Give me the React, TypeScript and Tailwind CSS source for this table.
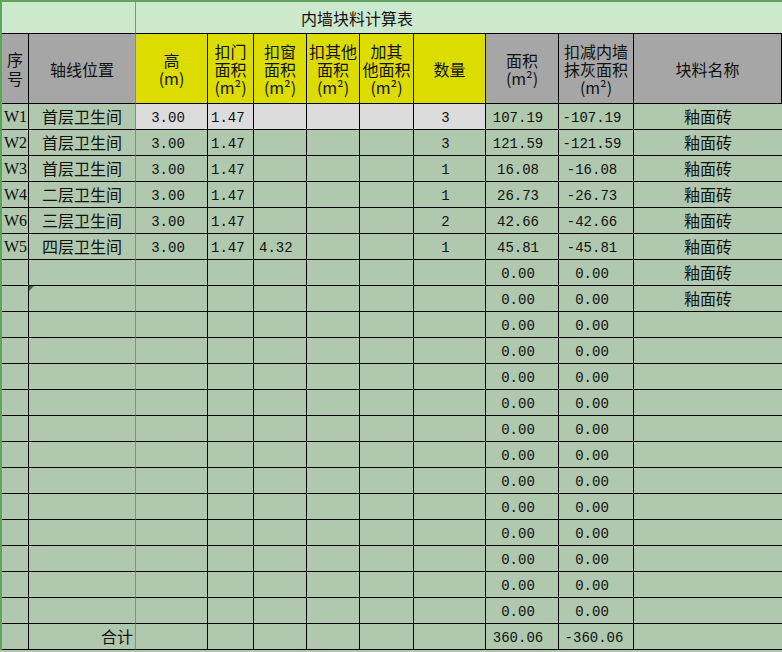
import React from 'react';

type Row = {
  no?: string;
  pos?: string;
  h?: string;
  door?: string;
  win?: string;
  qty?: string;
  area: string;
  deduct: string;
  name?: string;
  hl?: boolean;
  mark?: boolean;
};

const rows: Row[] = [
  { no: 'W1', pos: '首层卫生间', h: '3.00', door: '1.47', qty: '3', area: '107.19', deduct: '-107.19', name: '釉面砖', hl: true },
  { no: 'W2', pos: '首层卫生间', h: '3.00', door: '1.47', qty: '3', area: '121.59', deduct: '-121.59', name: '釉面砖' },
  { no: 'W3', pos: '首层卫生间', h: '3.00', door: '1.47', qty: '1', area: '16.08', deduct: '-16.08', name: '釉面砖' },
  { no: 'W4', pos: '二层卫生间', h: '3.00', door: '1.47', qty: '1', area: '26.73', deduct: '-26.73', name: '釉面砖' },
  { no: 'W6', pos: '三层卫生间', h: '3.00', door: '1.47', qty: '2', area: '42.66', deduct: '-42.66', name: '釉面砖' },
  { no: 'W5', pos: '四层卫生间', h: '3.00', door: '1.47', win: '4.32', qty: '1', area: '45.81', deduct: '-45.81', name: '釉面砖' },
  { area: '0.00', deduct: '0.00', name: '釉面砖' },
  { area: '0.00', deduct: '0.00', name: '釉面砖', mark: true },
  ...Array.from({ length: 12 }, () => ({ area: '0.00', deduct: '0.00' })),
];

const grid = 'grid grid-cols-[27px_107px_72px_46px_53px_53px_54px_72px_73px_75px_148px]';
const cjk = "font-['Noto_Sans_CJK_SC',sans-serif] text-[16px]";
const mono = "font-['Liberation_Mono',monospace] text-[14px] leading-none pt-[3px]";
const txt = `${cjk} leading-none pb-[2px]`;
const cell = 'border-r border-b border-black flex items-center min-w-0';
const greenLine = 'border-r-[#5fa85f]';

// header cell: one text block, lines split by \n
const Head = ({ text, bg, lh = '18px', extra = '' }: { text: string; bg: string; lh?: string; extra?: string }) => (
  <div className={`${cell} ${bg} ${extra} justify-center`}>
    <span
      className={`${cjk} whitespace-pre-line text-center ${lh === '19px' ? 'leading-[19px]' : 'leading-[18px]'}`}
    >
      {text}
    </span>
  </div>
);

export default function App() {
  const gray = 'bg-[#a6a6a6]';
  const yellow = 'bg-[#dcdc00]';
  return (
    <div className="w-[782px] h-[652px] bg-[#afc8ae] text-[#111] overflow-hidden">
      <div className="border-t-2 border-l-2 border-[#5fa35f]">
        {/* title */}
        <div className={`${grid} h-[32px] bg-[#cde9cd]`}>
          <div className={`col-span-2 border-r border-b border-b-black ${greenLine}`} />
          <div className={`col-span-9 border-b border-black flex items-center pl-[165px] ${cjk} leading-none`}>
            内墙块料计算表
          </div>
        </div>

        {/* header */}
        <div className={`${grid} h-[70px]`}>
          <Head text={'序\n号'} bg={gray} lh="19px" />
          <Head text="轴线位置" bg={gray} extra={greenLine} />
          <Head text={'高\n(m)'} bg={yellow} />
          <Head text={'扣门\n面积\n(m²)'} bg={yellow} />
          <Head text={'扣窗\n面积\n(m²)'} bg={yellow} />
          <Head text={'扣其他\n面积\n(m²)'} bg={yellow} />
          <Head text={'加其\n他面积\n(m²)'} bg={yellow} />
          <Head text="数量" bg={yellow} />
          <Head text={'面积\n(m²)'} bg={gray} />
          <Head text={'扣减内墙\n抹灰面积\n(m²)'} bg={gray} />
          <Head text="块料名称" bg={gray} />
        </div>

        {/* body */}
        {rows.map((r, i) => {
          const lg = r.hl ? 'bg-[#dcdcdc]' : '';
          return (
            <div key={i} className={`${grid} h-[26px]`}>
              <div className={`${cell} pl-[2px] font-['Liberation_Serif',serif] text-[16px] leading-none`}>{r.no}</div>
              <div className={`${cell} ${greenLine} justify-center ${txt} relative`}>
                {r.mark && (
                  <span className="absolute left-0 top-0 w-0 h-0 border-t-[5px] border-r-[5px] border-t-[#1f7a1f] border-r-transparent" />
                )}
                {r.pos}
              </div>
              <div className={`${cell} ${lg} justify-center pr-[7px] ${mono}`}>{r.h}</div>
              <div className={`${cell} ${lg} pl-[3px] ${mono}`}>{r.door}</div>
              <div className={`${cell} ${lg} pl-[5px] ${mono}`}>{r.win}</div>
              <div className={`${cell} ${lg}`} />
              <div className={`${cell} ${lg}`} />
              <div className={`${cell} ${lg} justify-center pr-[8px] ${mono}`}>{r.qty}</div>
              <div className={`${cell} justify-center pr-[8px] ${mono}`}>{r.area}</div>
              <div className={`${cell} justify-center pr-[8px] ${mono}`}>{r.deduct}</div>
              <div className={`${cell} border-r-0 justify-center ${txt}`}>{r.name}</div>
            </div>
          );
        })}

        {/* total */}
        <div className={`${grid} h-[26px]`}>
          <div className={cell} />
          <div className={`${cell} ${greenLine} justify-end pr-[2px] ${txt}`}>合计</div>
          <div className={cell} />
          <div className={cell} />
          <div className={cell} />
          <div className={cell} />
          <div className={cell} />
          <div className={cell} />
          <div className={`${cell} justify-center pr-[8px] ${mono}`}>360.06</div>
          <div className={`${cell} justify-center pr-[4px] ${mono}`}>-360.06</div>
          <div className={`${cell} border-r-0`} />
        </div>
      </div>
    </div>
  );
}
